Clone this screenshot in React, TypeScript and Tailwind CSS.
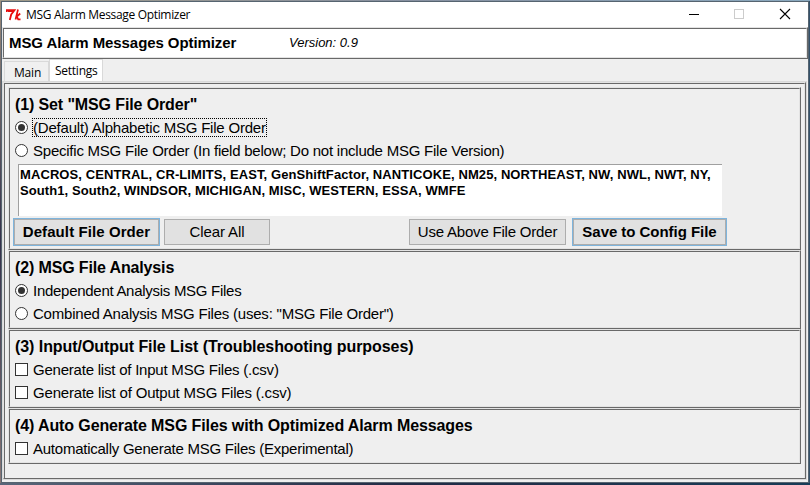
import React from "react";

const ridge =
  "border border-t-[#e3e3e3] border-l-[#e3e3e3] border-r-[#696969] border-b-[#696969]";
const ridgeInner =
  "h-full border border-t-[#696969] border-l-[#696969] border-r-[#e3e3e3] border-b-[#e3e3e3]";

function Section({ title, titleClass, height, children }: { title: string; titleClass: string; height: string; children: React.ReactNode }) {
  return (
    <section className={`${ridge} ${height} shrink-0`}>
      <div className={`${ridgeInner} pl-[5px] pt-[5px]`}>
        <h2 className={`h-[22px] whitespace-pre text-[16px] font-bold leading-[22px] ${titleClass}`}>{title}</h2>
        {children}
      </div>
    </section>
  );
}

function Radio({ label, on, focus, cls }: { label: string; on?: boolean; focus?: boolean; cls: string }) {
  return (
    <div className="flex h-[23px] items-center">
      <svg width="13" height="13" viewBox="0 0 13 13" className="shrink-0">
        <circle cx="6.5" cy="6.5" r="6" fill="#fff" stroke="#333" />
        {on && <circle cx="6.5" cy="6.5" r="3.5" fill="#333" />}
      </svg>
      <span className={`ml-1 h-[19px] border border-dotted whitespace-pre text-[15px] leading-[17px] ${focus ? "border-black" : "border-transparent"} ${cls}`}>
        {label}
      </span>
    </div>
  );
}

function Check({ label, cls }: { label: string; cls: string }) {
  return (
    <div className="flex h-[23px] items-center">
      <span className="size-[13px] shrink-0 border border-[#333] bg-white" />
      <span className={`ml-[5px] whitespace-pre text-[15px] leading-[17px] ${cls}`}>{label}</span>
    </div>
  );
}

export default function App() {
  return (
    <div className="flex h-[485px] w-[810px] flex-col overflow-hidden bg-[#34516a] font-['Liberation_Sans',Arial,sans-serif] text-black">
      <div className="h-px shrink-0 bg-linear-to-r from-[#a09a88] via-[#8790a0] to-[#8aa9bf]" />
      <div className="flex h-[482px]">
        <div className="w-px shrink-0 bg-linear-to-b from-[#9b8b7a] via-[#33304a] to-[#8b7775]" />
        <div className="flex w-[808px] flex-col border border-[#566470] bg-[#efefef]">
          <header className="flex h-[25px] shrink-0 items-center bg-white">
            <svg width="16" height="16" viewBox="0 0 16 16" className="ml-[4px] shrink-0" fill="none" stroke="#e80c0c">
              <path d="M.8 5V3.2H8.500L5.200 7.500 3.800 13M2 4h5" strokeWidth="1.800" />
              <path d="M12 2.500 9.500 12.500M14.200 6.500 10.800 9.500 12.200 12.300h2.300" strokeWidth="1.700" />
            </svg>
            <span className="ml-[4px] whitespace-pre font-['Open_Sans',sans-serif] text-[12px] leading-4 tracking-[-0.33px]">MSG Alarm Message Optimizer</span>
            <svg width="120" height="24" viewBox="0 0 120 24" className="ml-auto mr-0.5 shrink-0" fill="none">
              <path d="M3 11.5h10" stroke="#000" />
              <rect x="48.5" y="6.5" width="9" height="9" stroke="#ccc" />
              <path d="m94 6 10 10M104 6 94 16" stroke="#000" strokeWidth="1.1" />
            </svg>
          </header>
          <div className={`${ridge} h-8 shrink-0`}>
            <div className={`${ridgeInner} flex items-center bg-white pl-[5px]`}>
              <h1 className="w-[280px] whitespace-pre text-[15px] font-bold tracking-[-0.08px]">MSG Alarm Messages Optimizer</h1>
              <span className="whitespace-pre text-[13px] italic">Version: 0.9</span>
            </div>
          </div>
          <nav className="flex h-[22px] shrink-0 items-end pl-0.5 font-['Open_Sans',sans-serif] text-[12px]">
            <div className="h-5 w-[45px] border border-b-0 border-[#d9d9d9] bg-[#f0f0f0] pl-[9px] leading-[21px] tracking-[-0.2px]">Main</div>
            <div className="h-[22px] w-[54px] border border-b-0 border-[#d9d9d9] bg-white pl-[5px] leading-[22px] tracking-[-0.25px]">Settings</div>
          </nav>
          <main className="mr-px h-[399px] shrink-0 border border-[#d9d9d9]">
            <div className={`${ridge} h-full`}>
              <div className={`${ridgeInner} flex flex-col border-b-0 pl-[3px] pr-[3px] pt-[3px]`}>
                <Section title={'(1) Set "MSG File Order"'} titleClass="tracking-[-0.12px]" height="h-[163px]">
                  <Radio label="(Default) Alphabetic MSG File Order" on focus cls="tracking-[-0.21px]" />
                  <Radio label="Specific MSG File Order (In field below; Do not include MSG File Version)" cls="tracking-[-0.235px]" />
                  <div className="ml-[3px] mt-[2px] h-[52px] w-[704px] border-l border-t border-[#a0a0a0] bg-white pl-px pt-0.5 text-[13px] font-bold leading-4 tracking-[0.095px] whitespace-pre">
                    <div>MACROS, CENTRAL, CR-LIMITS, EAST, GenShiftFactor, NANTICOKE, NM25, NORTHEAST, NW, NWL, NWT, NY,</div>
                    <div>South1, South2, WINDSOR, MICHIGAN, MISC, WESTERN, ESSA, WMFE</div>
                  </div>
                  <div className="-ml-0.5 mt-0.5 flex items-center text-[15px] whitespace-pre">
                    <button className="h-7 w-[147px] border border-[#7eb4dc] bg-[#e1e1e1] p-0"><span className="flex h-full items-center justify-center border border-[#adadad] font-bold tracking-[0.09px]">Default File Order</span></button>
                    <button className="ml-1 h-[26px] w-[106px] border border-[#adadad] bg-[#e1e1e1] tracking-[-0.1px]">Clear All</button>
                    <button className="ml-[139px] h-[26px] w-[157px] border border-[#adadad] bg-[#e1e1e1] tracking-[-0.2px]">Use Above File Order</button>
                    <button className="ml-1.5 h-7 w-[155px] border border-[#7eb4dc] bg-[#e1e1e1] p-0"><span className="flex h-full items-center justify-center border border-[#adadad] font-bold tracking-[-0.04px]">Save to Config File</span></button>
                  </div>
                </Section>
                <Section title="(2) MSG File Analysis" titleClass="tracking-[-0.14px]" height="h-[79px]">
                  <Radio label="Independent Analysis MSG Files" on cls="tracking-[-0.28px]" />
                  <Radio label={'Combined Analysis MSG Files (uses: "MSG File Order")'} cls="tracking-[-0.21px]" />
                </Section>
                <Section title="(3) Input/Output File List (Troubleshooting purposes)" titleClass="tracking-[-0.06px]" height="h-[79px]">
                  <Check label="Generate list of Input MSG Files (.csv)" cls="tracking-[-0.22px]" />
                  <Check label="Generate list of Output MSG Files (.csv)" cls="tracking-[-0.19px]" />
                </Section>
                <Section title="(4) Auto Generate MSG Files with Optimized Alarm Messages" titleClass="tracking-[-0.11px]" height="h-[56px]">
                  <Check label="Automatically Generate MSG Files (Experimental)" cls="tracking-[-0.245px]" />
                </Section>
              </div>
            </div>
          </main>
        </div>
      </div>
      <div className="h-0.5 shrink-0 bg-linear-to-r from-[#596679] via-[#222b45] to-[#173c57]" />
    </div>
  );
}
